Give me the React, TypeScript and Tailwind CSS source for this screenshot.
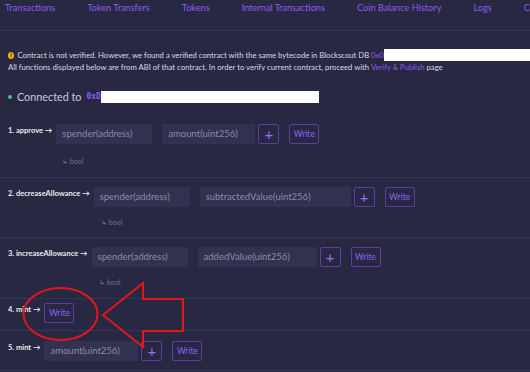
import React from 'react'

const nav = ['Transactions', 'Token Transfers', 'Tokens', 'Internal Transactions', 'Coin Balance History', 'Logs', 'Code']

type Fn = {
  label: string
  inputs: { name: string; w: string }[]
  bool?: string
  plus?: boolean
  pad: string
}

const fns: Fn[] = [
  {
    label: '1. approve →',
    inputs: [{ name: 'spender(address)', w: 'w-[96px]' }, { name: 'amount(uint256)', w: 'w-[93px]' }],
    bool: 'pl-[54px] mt-[13px]',
    plus: true,
    pad: 'pt-[0px] pb-[11px]',
  },
  {
    label: '2. decreaseAllowance →',
    inputs: [{ name: 'spender(address)', w: 'w-[96px]' }, { name: 'subtractedValue(uint256)', w: 'w-[151px]' }],
    bool: 'pl-[93px] mt-[11px]',
    plus: true,
    pad: 'pt-[9px] pb-[10px]',
  },
  {
    label: '3. increaseAllowance →',
    inputs: [{ name: 'spender(address)', w: 'w-[96px]' }, { name: 'addedValue(uint256)', w: 'w-[119px]' }],
    bool: 'pl-[91px] mt-[11px]',
    plus: true,
    pad: 'pt-[9px] pb-[11px]',
  },
  { label: '4. mint →', inputs: [], pad: 'pt-[4px] pb-[7px]' },
  { label: '5. mint →', inputs: [{ name: 'amount(uint256)', w: 'w-[94px]' }], plus: true, pad: 'pt-[10px] pb-[9px]' },
]

const WriteBtn = () => (
  <button className="flex h-[20px] w-[30px] items-center justify-center rounded-[2px] border border-[#5a3fa3] text-[8.5px] text-[#8f62f2]">
    Write
  </button>
)

const FnRow = ({ fn }: { fn: Fn }) => (
  <div className={`border-b border-[#33345a] pl-[8px] ${fn.pad}`}>
    <div className="flex items-start">
      <span className="mt-[1px] mr-[4px] whitespace-nowrap text-[7.5px] font-bold leading-[12px] text-[#e8e8f2]">{fn.label}</span>
      {fn.inputs.map((inp, k) => (
        <div
          key={k}
          className={`${inp.w} ${k > 0 ? 'ml-[10px]' : ''} h-[20px] overflow-hidden whitespace-nowrap bg-[#31324f] px-[6px] text-[9.5px] leading-[20px] text-[#8b8ba8]`}
        >
          {inp.name}
        </div>
      ))}
      {fn.plus && (
        <div className="ml-[3px] flex h-[20px] w-[21px] items-center justify-center rounded-[2px] border border-[#5a3fa3] text-[15px] leading-none text-[#9b6cf5]">
          +
        </div>
      )}
      <div className={fn.inputs.length ? 'ml-[10px]' : ''}>
        <WriteBtn />
      </div>
    </div>
    {fn.bool && <div className={`text-[7px] leading-[9px] text-[#6f6f8e] ${fn.bool}`}>↳ bool</div>}
  </div>
)

export default function App() {
  return (
    <div className="relative h-[372px] w-[530px] overflow-hidden bg-[#282843] font-['Lato',sans-serif]">
      <div className="flex h-[31px] gap-[32px] border-b border-[#34355a] pl-[5px] pt-[1px] text-[9.2px] leading-[14px] whitespace-nowrap text-[#8b5cf0]">
        {nav.map((n) => (
          <span key={n}>{n}</span>
        ))}
      </div>

      <div className="pl-[8px] pt-[18px] text-[7.7px] leading-[12px] text-[#d8d8e6]">
        <div className="flex h-[12px] items-center whitespace-nowrap">
          <span className="mr-[3px] flex h-[7px] w-[7px] items-center justify-center rounded-full bg-[#f0a800] text-[6px] font-bold leading-none text-[#282843]">
            !
          </span>
          <span>
            Contract is not verified. However, we found a verified contract with the same bytecode in Blockscout DB{' '}
            <span className="text-[#8b5cf0]">0x0</span>
          </span>
          <span className="h-[12px] w-[160px] bg-white"></span>
        </div>
        <div className="h-[12px] whitespace-nowrap">
          All functions displayed below are from ABI of that contract. In order to verify current contract, proceed with{' '}
          <span className="text-[#8b5cf0]">Verify &amp; Publish</span> page
        </div>
      </div>

      <div className="flex h-[51px] items-start pl-[8px] pt-[17px]">
        <div className="flex h-[14px] items-center">
          <span className="mr-[5px] h-[4px] w-[4px] rounded-full bg-[#3ec48a]"></span>
          <span className="text-[10.8px] leading-[14px] text-[#c9c9da]">Connected to</span>
          <span className="ml-[5px] font-['DejaVu_Sans_Mono',monospace] text-[8px] font-bold text-[#8b5cf0]">0xD</span>
          <span className="h-[12px] w-[218px] bg-white"></span>
        </div>
      </div>

      <div>
        {fns.map((fn, i) => (
          <FnRow key={i} fn={fn} />
        ))}
      </div>

      <svg className="pointer-events-none absolute left-0 top-0" width="530" height="372">
        <ellipse cx="60.5" cy="314" rx="37" ry="26" fill="none" stroke="#e3161b" strokeWidth="2" />
        <polygon
          points="103,315 143,283 143,299 183,299 183,331 143,331 143,347"
          fill="none"
          stroke="#e3161b"
          strokeWidth="2"
        />
      </svg>
    </div>
  )
}
